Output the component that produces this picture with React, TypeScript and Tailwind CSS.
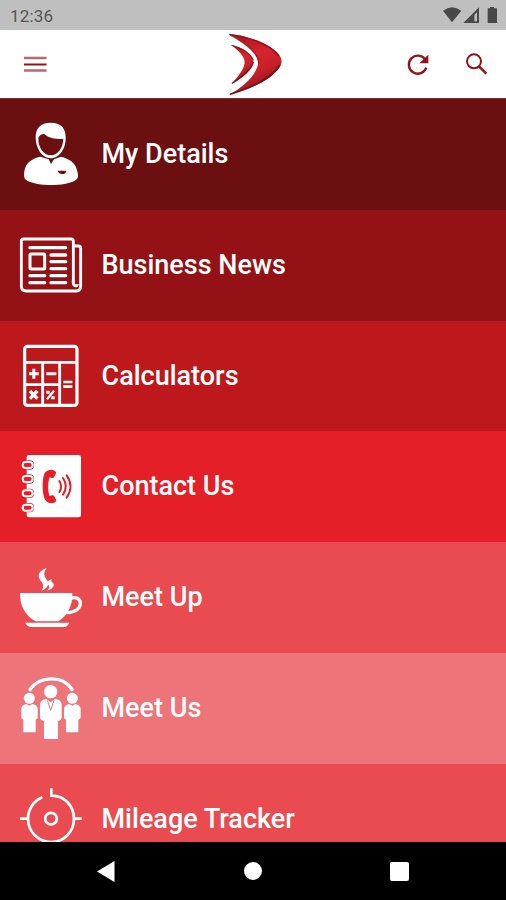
import type { ReactNode } from 'react';

type MenuItem = {
  label: string;
  row: string;
  icon: ReactNode;
};

const iconClass = 'w-16 h-16 shrink-0';

function PersonIcon() {
  return (
    <svg viewBox="27 36 192 192" className={iconClass} fill="white">
      <path
        fillRule="evenodd"
        d="M122 38C91 38 77 55 77 82C77 116 96 145 122 145C149 145 168 115 167 82C167 54 153 38 122 38ZM85 84C88 75 96 71 103 72C114 83 135 89 160 86C159 113 144 136 122 136C101 136 84 112 85 84Z"
      />
      <path
        fillRule="evenodd"
        d="M91 140C66 146 47 157 43 184C41 200 42 207 52 212C82 229 165 229 194 212C205 206 206 200 202 184C198 158 177 146 153 140L132 148L123 162L116 148ZM143 182H169C168 189 164 192 156 192C149 192 145 188 143 182Z"
      />
    </svg>
  );
}

function NewsIcon() {
  return (
    <svg viewBox="27 24 192 192" className={iconClass} fill="none" stroke="white" strokeWidth="8.500">
      <path d="M190 176V49Q190 42 183 42H41Q34 42 34 49V183Q34 198 49 198H199Q212 197 212 182V70Q212 63 205 63H194" />
      <path d="M190 165C187 187 202 185 202 178" />
      <rect x="60" y="87" width="44" height="45" rx="3" strokeWidth="9" />
      <g strokeWidth="10" strokeLinecap="round">
        <path d="M60 68H167M123 90H167M123 110H167M123 131H167M60 152H104M123 152H167M60 173H104M123 173H167" />
      </g>
    </svg>
  );
}

function CalculatorIcon() {
  return (
    <svg viewBox="27 27 192 192" className={iconClass} fill="none" stroke="white">
      <rect x="44" y="34" width="157" height="177" rx="8" strokeWidth="9.500" />
      <path d="M44 82H201M98 82V211M149 82V211M44 149H149" strokeWidth="8.500" />
      <path d="M57 116H86M71.500 101V131M109 116H139" strokeWidth="9" />
      <path d="M160 141H187M160 155H187" strokeWidth="8" />
      <path d="M60 168L82 191M82 168L60 191" strokeWidth="10" />
      <path d="M132 167L111 193" strokeWidth="7" />
      <path d="M109 172H119M124 188H134" strokeWidth="9" />
    </svg>
  );
}

function ContactIcon() {
  return (
    <svg viewBox="27 27 192 192" className={iconClass} fill="none">
      <rect x="50" y="30" width="163" height="187" rx="7" fill="white" />
      {[60, 102, 145, 188].map((y) => (
        <g key={y}>
          <rect x="44" y={y - 14} width="28" height="28" rx="12" fill="#e41f27" />
          <rect x="38" y={y - 9} width="30" height="18" rx="9" fill="#e41f27" stroke="white" strokeWidth="6" />
        </g>
      ))}
      <path
        d="M134 77C124 72 113 74 106 82C95 96 96 150 106 165C114 176 125 177 135 172Q140 169 138 164L133 154Q130 149 125 151L119 153C113 142 113 110 119 97L126 99Q131 100 133 95L138 85Q140 80 134 77Z"
        fill="#e41f27"
      />
      <path d="M148 108Q159 124 148 141M159 99Q176 124 159 149M170 91Q193 124 170 158" stroke="#e41f27" strokeWidth="6" strokeLinecap="round" />
    </svg>
  );
}

function CupIcon() {
  return (
    <svg viewBox="27 15 192 192" className={iconClass} fill="white">
      <path d="M30 99H187C189 136 171 168 145 184H76C46 168 28 134 30 99Z" />
      <path d="M181 115C198 109 211 116 211 130C211 147 193 158 169 158" fill="none" stroke="white" strokeWidth="10" />
      <path d="M46 188H178Q173 200 162 201H65Q50 200 46 188Z" />
      <path d="M110 24C86 32 80 47 92 62C103 75 100 82 95 92C113 84 120 72 110 59C100 46 101 36 110 24Z" />
      <path d="M126 56C110 63 110 70 116 76C120 81 117 86 112 92C132 84 135 74 128 68C122 64 123 60 126 56Z" />
    </svg>
  );
}

function PeopleIcon() {
  return (
    <svg viewBox="27 24 192 192" className={iconClass} fill="white">
      <path d="M60 65C86 24 160 20 186 65" fill="none" stroke="white" strokeWidth="10" strokeLinecap="round" />
      <circle cx="58" cy="91" r="16.500" />
      <circle cx="187" cy="91" r="16.500" />
      <circle cx="122" cy="71" r="20" />
      <path d="M49 108L58 113L67 108Q83 111 83 123V148Q83 154 77 155V193H40V155Q34 154 34 147V123Q34 111 49 108Z" />
      <path d="M178 108L187 113L196 108Q212 111 212 123V147Q212 154 205 155V193H168V155Q162 154 162 148V123Q162 111 178 108Z" />
      <path d="M109 93L122 103L135 93Q155 95 155 110V148Q155 157 144 159V213H102V159Q90 157 90 148V110Q90 95 109 93Z" />
      <path d="M112 97L122 127L132 97" fill="none" stroke="#ee757a" strokeWidth="3" />
    </svg>
  );
}

function TargetIcon() {
  return (
    <svg viewBox="27 21 192 192" className={iconClass} fill="none" stroke="white" strokeWidth="8">
      <path d="M124 25V47C163 46 192 78 192 116C192 155 162 186 124 186C85 186 54 155 54 116C54 87 72 62 97 52" />
      <circle cx="123" cy="116" r="17.500" />
      <path d="M30 116H54M192 116H215" />
    </svg>
  );
}

function Logo() {
  return (
    <svg viewBox="0 0 210 216" className="w-[70px] h-[72px]">
      <defs>
        <linearGradient id="wing" x1="0.2" y1="0" x2="0.65" y2="1">
          <stop offset="0" stopColor="#a8131a" />
          <stop offset="0.4" stopColor="#d8242d" />
          <stop offset="0.65" stopColor="#c9202a" />
          <stop offset="1" stopColor="#740d12" />
        </linearGradient>
      </defs>
      <path d="M26 18C75 21 153 44 180 84Q190 102 179 118C151 160 82 186 26 201C66 178 103 149 114 110C119 76 72 43 26 18Z" fill="url(#wing)" />
      <path d="M28 19C78 25 151 47 176 84" fill="none" stroke="#8d1219" strokeWidth="4" />
      <path d="M180 111C151 157 84 183 30 199" fill="none" stroke="#6b0a0f" strokeWidth="5" opacity="0.8" />
      <path d="M30 21C76 46 118 76 116 108" fill="none" stroke="#7d0e14" strokeWidth="4" opacity="0.7" />
      <path d="M33 51C67 58 93 74 101 96C101 124 66 150 34 168C52 148 70 128 74 106C75 86 56 67 33 51Z" fill="url(#wing)" />
      <path d="M35 52C66 61 88 75 98 94" fill="none" stroke="#8d1219" strokeWidth="3" />
      <path d="M100 102C94 127 66 148 36 166" fill="none" stroke="#6b0a0f" strokeWidth="4" opacity="0.8" />
    </svg>
  );
}

const items: MenuItem[] = [
  { label: 'My Details', row: 'h-[111px] bg-[#6b0f10]', icon: <PersonIcon /> },
  { label: 'Business News', row: 'h-[111px] bg-[#941216]', icon: <NewsIcon /> },
  { label: 'Calculators', row: 'h-[110px] bg-[#bd181b]', icon: <CalculatorIcon /> },
  { label: 'Contact Us', row: 'h-[111px] bg-[#e41f27]', icon: <ContactIcon /> },
  { label: 'Meet Up', row: 'h-[111px] bg-[#e94b50]', icon: <CupIcon /> },
  { label: 'Meet Us', row: 'h-[111px] bg-[#ed757a]', icon: <PeopleIcon /> },
  { label: 'Mileage Tracker', row: 'h-[111px] bg-[#e94b50]', icon: <TargetIcon /> },
];

function StatusBar() {
  return (
    <div className="h-[30px] shrink-0 bg-[#bfbfbf] flex items-center justify-between pl-2.5 text-[#555555]">
      <span className="text-[17px] leading-none tracking-[0.2px] pt-0.5">12:36</span>
      <svg viewBox="0 0 198 90" className="w-[66px] h-[30px]" fill="#484848">
        <path d="M9 32Q36 11 64 32L36 67Z" />
        <path fillRule="evenodd" d="M117 22V69H70ZM111 37L103 45V64H111Z" />
        <path d="M143 25H150V21H162V25H171V69H143Z" />
      </svg>
    </div>
  );
}

function Header() {
  return (
    <header className="h-[69px] shrink-0 bg-white border-b border-[#7a3034] grid grid-cols-3 items-center">
      <button className="justify-self-start ml-6" aria-label="Menu">
        <svg viewBox="0 0 23 17" className="w-[23px] h-[17px]" fill="none" strokeWidth="2">
          <path d="M0 2H22.500M0 14.500H22.500" stroke="#b06c70" strokeWidth="2.500" />
          <path d="M0 8.500H22.500" stroke="#8f1218" />
        </svg>
      </button>
      <div className="justify-self-center h-[68px] flex items-center -mr-1">
        <Logo />
      </div>
      <div className="justify-self-end flex gap-[35px] mr-[17px]">
        <button aria-label="Refresh">
          <svg viewBox="78 156 72 72" className="w-6 h-6" fill="none" stroke="#931118" strokeWidth="7">
            <path d="M136 179A27 27 0 1 0 139 203" />
            <path d="M145 164V190H118Z" fill="#931118" stroke="none" />
          </svg>
        </button>
        <button aria-label="Search">
          <svg viewBox="255 156 72 72" className="w-6 h-6" fill="none" stroke="#931118" strokeWidth="6">
            <circle cx="282" cy="184" r="21" />
            <path d="M297 199L319 221" strokeWidth="7.500" />
          </svg>
        </button>
      </div>
    </header>
  );
}

function NavBar() {
  return (
    <nav className="h-[58px] shrink-0 bg-black flex items-center justify-between pl-[97px] pr-[97px]">
      <svg viewBox="0 0 18 21" className="w-[18px] h-[21px]" fill="white">
        <path d="M0 10.500L17.500 0V21Z" />
      </svg>
      <div className="size-[18px] rounded-full bg-white" />
      <div className="size-[19px] rounded-[2px] bg-white" />
    </nav>
  );
}

export default function App() {
  return (
    <div className="w-[506px] h-[900px] flex flex-col overflow-hidden bg-black font-['Roboto',sans-serif]">
      <StatusBar />
      <Header />
      <main className="flex-1 min-h-0 overflow-hidden">
        {items.map((item) => (
          <div key={item.label} className={`${item.row} flex items-start pt-[23px] pl-[19px]`}>
            {item.icon}
            <span className="ml-[18.5px] mt-3.5 text-[27px] leading-9 font-medium text-white whitespace-nowrap">
              {item.label}
            </span>
          </div>
        ))}
      </main>
      <NavBar />
    </div>
  );
}
